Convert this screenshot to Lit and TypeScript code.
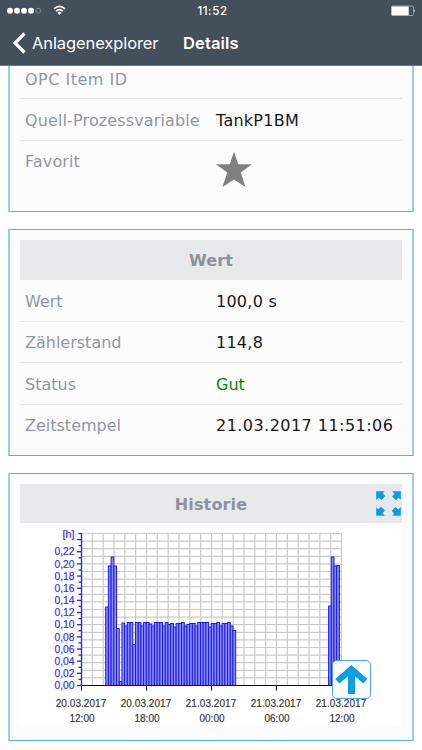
import { LitElement, html, svg, css } from "lit";
import { customElement } from "lit/decorators.js";

const X0 = 81.5, X1 = 341.5, Y0 = 685.5, Y1 = 533.5;
const STEP = 260 / 96;
const BARS: number[] = [
  607, 566, 557, 566, 628.5, 681.5, 623, 626, 622.5, 622.5, 644.5, 622.5, 622.5, 626, 622.5, 622.5,
  624, 626, 622.5, 622.5, 622.5, 626, 622.5, 624.5, 623.5, 627, 623.5, 623.5, 622.5, 626, 624.5, 623.5,
  623.5, 626, 622.5, 622.5, 622.5, 622.5, 627, 623.5, 623.5, 622.5, 626, 623.5, 623.5, 622.5, 626, 630.5,
];
const LATE: number[] = [606, 557, 566, 565.5];
const TIMES = [
  ["20.03.2017", "12:00"], ["20.03.2017", "18:00"], ["21.03.2017", "00:00"],
  ["21.03.2017", "06:00"], ["21.03.2017", "12:00"],
];

@customElement("history-chart")
export class HistoryChart extends LitElement {
  static styles = css`
    :host { display: block; height: 203px; background: #fff; }
    svg { display: block; }
    .grid { stroke: #cacaca; stroke-width: 1.2; }
    .bar { fill: #8c8cff; stroke: #1c1ce2; stroke-width: 1; }
    .axis { stroke: #2a22e8; stroke-width: 1.3; }
    .base { stroke: #111; stroke-width: 1.1; }
    text { font-family: "Liberation Sans", Arial, sans-serif; }
    .y { font-size: 10px; fill: #3a30e8; stroke: #3a30e8; stroke-width: 0.2; text-anchor: end; }
    .x { font-size: 10px; fill: #333; stroke: #333; stroke-width: 0.15; text-anchor: middle; }
  `;

  private bars(tops: number[], from: number) {
    return tops.map((y, i) => svg`<rect class="bar" x=${from + i * STEP} y=${y} width=${STEP} height=${Y0 - y}></rect>`);
  }

  render() {
    const cols = Array.from({ length: 25 }, (_, i) => X0 + (i * (X1 - X0)) / 24);
    const rows = Array.from({ length: 21 }, (_, i) => Y1 + (i * (Y0 - Y1)) / 20);
    const ticks = Array.from({ length: 26 }, (_, i) => i);
    const unit = (Y0 - Y1) / 25;
    return html`<svg width="382" height="203" viewBox="20 523 382 203">
      ${cols.map((x) => svg`<line class="grid" x1=${x} x2=${x} y1=${Y1} y2=${Y0}></line>`)}
      ${rows.map((y) => svg`<line class="grid" x1=${X0} x2=${X1} y1=${y} y2=${y}></line>`)}
      ${this.bars(BARS, 105.7)}${this.bars(LATE, 328.6)}
      <line class="axis" x1=${X0} x2=${X0} y1="533" y2="686"></line>
      ${ticks.map((i) => svg`<line class="axis" x1=${i % 2 ? 78.5 : 77} x2=${X0} y1=${Y0 - i * unit} y2=${Y0 - i * unit}></line>`)}
      ${ticks.filter((i) => i % 2 === 0 && i < 24).map((i) => svg`
        <text class="y" x="74.5" y=${Y0 - i * unit + 3.7} textLength="20" lengthAdjust="spacingAndGlyphs">${(i / 100).toFixed(2).replace(".", ",")}</text>`)}
      <text class="y" x="74.5" y="537.5" textLength="12" lengthAdjust="spacingAndGlyphs">[h]</text>
      <line class="base" x1=${X0} x2=${X1} y1=${Y0} y2=${Y0}></line>
      ${TIMES.map(([day, time], i) => svg`
        <line class="base" x1=${X0 + i * 65} x2=${X0 + i * 65} y1="685" y2="690.5"></line>
        <text class="x" x=${X0 + i * 65 - 0.5} y="706.5" textLength="50.5">${day}</text>
        <text class="x" x=${X0 + i * 65 + 0.5} y="721.5">${time}</text>`)}
    </svg>`;
  }
}

@customElement("app-root")
export class AppRoot extends LitElement {
  static styles = css`
    :host { display: block; position: relative; width: 422px; height: 750px; overflow: hidden;
      background: #fff; font: 16px/20px "DejaVu Sans", Verdana, sans-serif; color: #15171c; }
    * { box-sizing: border-box; }
    header { height: 66px; background: #434f5b; border-bottom: 1px solid #6d757e; color: #fff;
      font-family: Inter, sans-serif; }
    .status { height: 22px; display: grid; grid-template-columns: 1fr 40px 1fr; align-items: center; padding: 0 7px; }
    .signal { display: flex; }
    .clock { font-size: 11.5px; font-weight: 500; text-align: center; white-space: nowrap; letter-spacing: 0.6px; padding-left: 3px; }
    .battery { justify-self: end; margin-right: -2px; }
    .nav { height: 43px; display: flex; align-items: center; padding: 0 0 2px 13px; }
    .back { margin-left: 6px; width: 151px; font-size: 16.5px; letter-spacing: -0.1px; white-space: nowrap; }
    .title { font-size: 16.5px; font-weight: 600; letter-spacing: 0.12px; }
    svg { display: block; }
    main { display: flex; flex-direction: column; gap: 17px; padding: 0 8px; }
    .card { border: solid #5aaee0; border-width: 1px 2px; border-left-color: #98cef0; border-right-color: #98cef0;
      background: #fcfcfd; padding: 10px 10px 0; }
    .first { height: 146px; border-top: 0; padding-top: 0; }
    .value { height: 227px; }
    .history { height: 268px; }
    .row { display: flex; height: 41.5px; padding: 11.8px 5px 0; border-bottom: 1px solid #e8e8eb; white-space: nowrap; }
    .row:last-child { border-bottom: 0; }
    .cut { height: 33px; padding-top: 4px; }
    .label { width: 191px; flex: none; color: #9296a0; }
    .first .label { letter-spacing: 0.13px; }
    .first .cut .label { letter-spacing: 0.5px; }
    .val { letter-spacing: 0.25px; }
    .stamp { letter-spacing: 0.46px; }
    .good { color: #0c800c; }
    .head { height: 40px; background: #e7e8ea; display: grid; grid-template-columns: 28px 1fr 28px; align-items: center;
      text-align: center; font-weight: 700; color: #8d919e; letter-spacing: 0.15px; }
    .history .head { height: 39px; }
    .head .name { grid-column: 2; padding-top: 2px; }
    .expand { margin: -1px 0 0 2px; }
    .star { margin-top: -1px; }
    .up { position: absolute; left: 332px; top: 660px; width: 39px; height: 39px; border: 1px solid #4aa9dc;
      border-radius: 5px; background: #fbfcfd; }
  `;

  private row(label: string, value: unknown, cls = "val") {
    return html`<div class="row"><span class="label">${label}</span><span class=${cls}>${value}</span></div>`;
  }

  render() {
    return html`
      <header>
        <div class="status">
          <svg class="signal" width="62" height="16" viewBox="7 3 62 16" fill="#fff">
            ${[10, 17, 24, 31].map((x) => svg`<circle cx=${x} cy="10.7" r="3"></circle>`)}
            <circle cx="38.3" cy="10.7" r="2.5" fill="none" stroke="#a9b0b7" stroke-width=".6"></circle>
            <g fill="none" stroke="#fff" stroke-width="1.7"><path d="M54 8.8Q59.5 4 65 8.8M56.1 11.1Q59.5 8.1 62.9 11.1"></path></g>
            <path d="M57.4 12.7Q59.5 11 61.6 12.7L59.5 14.8Z"></path>
          </svg>
          <span class="clock">11:52</span>
          <svg class="battery" width="26" height="12" viewBox="391 4.5 26 12">
            <rect x="391.5" y="5.5" width="22" height="9.5" rx="1" fill="none" stroke="#aeb5bb" stroke-width=".8"></rect>
            <rect x="391.7" y="6" width="17" height="8.7" fill="#fff"></rect>
            <path d="M414.5 8.8q1.5 1.4 0 3z" fill="#fff"></path>
          </svg>
        </div>
        <div class="nav">
          <svg width="13" height="22" viewBox="0 0 13 22"><path d="M11.5 1.5L2 11l9.5 9.5" fill="none" stroke="#fff" stroke-width="3.2"></path></svg>
          <span class="back">Anlagenexplorer</span><span class="title">Details</span>
        </div>
      </header>
      <main>
        <section class="card first">
          <div class="row cut"><span class="label">OPC Item ID</span></div>
          ${this.row("Quell-Prozessvariable", "TankP1BM")}
          ${this.row("Favorit", html`<svg class="star" width="36" height="37" viewBox="0 0 36 37"><path fill="#808080" d="M18 .5L22.2 13.3H36L24.8 21.4L29.5 36L18 28.5L6.5 36L11.2 21.4L0 13.3H13.8Z"></path></svg>`)}
        </section>
        <section class="card value">
          <div class="head"><span class="name">Wert</span></div>
          ${this.row("Wert", "100,0 s")}
          ${this.row("Zählerstand", "114,8")}
          ${this.row("Status", "Gut", "good")}
          ${this.row("Zeitstempel", "21.03.2017 11:51:06", "stamp")}
        </section>
        <section class="card history">
          <div class="head"><span class="name">Historie</span>
            <svg class="expand" width="25" height="25" viewBox="0 0 25 25" fill="#069ee0">
              ${[0, 90, 180, 270].map((a) => svg`<path transform="rotate(${a} 12.5 12.5)" d="M.2.2H8.7L6.8 2.3L9.3 5.1L5.6 8.9L2.7 6.5L.2 8.9Z"></path>`)}
            </svg>
          </div>
          <history-chart></history-chart>
        </section>
      </main>
      <div class="up"><svg width="37" height="37" viewBox="0 0 37 37"><path fill="#079fe3" d="M18.4 4L34.3 18L30.3 22.5L22 15.2V33H15V15.2L6.4 22.5L2.3 18Z"></path></svg></div>
    `;
  }
}
